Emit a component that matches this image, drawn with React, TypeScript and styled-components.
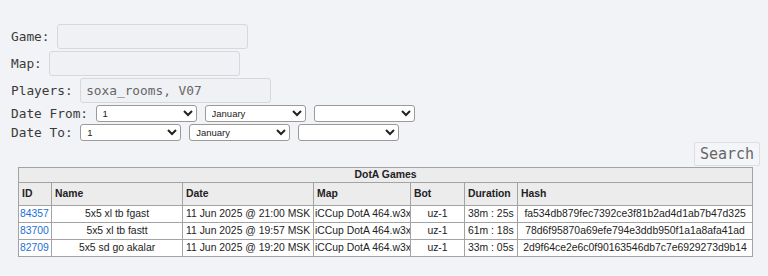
import React from "react";
import styled, { createGlobalStyle } from "styled-components";

const Global = createGlobalStyle`
  html, body { background: #f1f3f7; }
  body { margin: 8px; font-family: "DejaVu Sans Mono", monospace; color: #333; }
`;

const Page = styled.div`
  padding-top: 16px;
`;

const Form = styled.div`
  display: flex;
  flex-direction: column;
  gap: 2px;
  padding-left: 3px;
`;

const Row = styled.div`
  display: flex;
  align-items: center;
  font-size: 12.8px;
  gap: 7.5px;
  white-space: pre;
`;

const Label = styled.span`
  color: #3a3a3a;
`;

const TextInput = styled.input<{ $w: number }>`
  box-sizing: border-box;
  width: ${(p) => p.$w}px;
  height: 25px;
  border: 1px solid #d6d8dd;
  border-radius: 3px;
  background: #eff1f5;
  font-family: "DejaVu Sans Mono", monospace;
  font-size: 12.8px;
  color: #666;
  padding: 0 5px;
  margin: 0;
  outline: none;
`;

const Selects = styled.div`
  display: flex;
  gap: 8px;
`;

const Select = styled.select`
  box-sizing: border-box;
  width: 101px;
  height: 17px;
  margin: 0;
  font-family: "Liberation Sans", Arial, sans-serif;
  font-size: 9.5px;
  color: #222;
  background: #fff;
  border: 1px solid #9a9a9a;
  border-radius: 3px;
  padding: 0 2px;
`;

const ButtonBar = styled.div`
  display: flex;
  justify-content: flex-end;
  margin-top: 1px;
`;

const SearchButton = styled.button`
  box-sizing: border-box;
  width: 66px;
  height: 24px;
  border: 1px solid #dcdee2;
  border-radius: 2px;
  background: #f4f5f8;
  color: #666;
  font-family: "DejaVu Sans Mono", monospace;
  font-size: 15px;
  padding: 0;
  margin: 0;
`;

const Table = styled.table`
  margin: 1px 0 0 10px;
  border-collapse: collapse;
  table-layout: fixed;
  width: 734px;
  font-family: "Liberation Sans", Arial, sans-serif;
  font-size: 10.4px;
  color: #222;
  border: 1px solid #a3a3a3;
`;

const Caption = styled.th`
  background: #ececec;
  border: 1px solid #a3a3a3;
  font-weight: bold;
  font-size: 10.4px;
  padding: 1px 0 1px;
  line-height: 12px;
  text-align: center;
`;

const Th = styled.th`
  background: #ececec;
  border: 1px solid #a3a3a3;
  text-align: left;
  font-weight: bold;
  padding: 5px 3px 5px;
  line-height: 12px;
`;

const Td = styled.td<{ $align?: string; $pad?: string }>`
  background: #fff;
  border: 1px solid #a3a3a3;
  text-align: ${(p) => p.$align || "left"};
  padding: ${(p) => p.$pad || "2px 3px"};
  line-height: 12px;
  white-space: nowrap;
  overflow: hidden;
`;

const IdLink = styled.a`
  color: #1c6fd8;
  text-decoration: none;
`;

const cols = [33, 131, 131, 97, 54, 53, 235];

const games = [
  { id: "84357", name: "5x5 xl tb fgast", date: "11 Jun 2025 @ 21:00 MSK", map: "iCCup DotA 464.w3x", bot: "uz-1", dur: "38m : 25s", hash: "fa534db879fec7392ce3f81b2ad4d1ab7b47d325" },
  { id: "83700", name: "5x5 xl tb fastt", date: "11 Jun 2025 @ 19:57 MSK", map: "iCCup DotA 464.w3x", bot: "uz-1", dur: "61m : 18s", hash: "78d6f95870a69efe794e3ddb950f1a1a8afa41ad" },
  { id: "82709", name: "5x5 sd go akalar", date: "11 Jun 2025 @ 19:20 MSK", map: "iCCup DotA 464.w3x", bot: "uz-1", dur: "33m : 05s", hash: "2d9f64ce2e6c0f90163546db7c7e6929273d9b14" },
];

const DateSelects = () => (
  <Selects>
    <Select defaultValue="1">
      <option value="1">1</option>
    </Select>
    <Select defaultValue="January">
      <option value="January">January</option>
    </Select>
    <Select defaultValue="">
      <option value=""></option>
    </Select>
  </Selects>
);

export default function App() {
  return (
    <Page>
      <Global />
      <Form>
        <Row>
          <Label>Game:</Label>
          <TextInput $w={191} />
        </Row>
        <Row>
          <Label>Map:</Label>
          <TextInput $w={191} />
        </Row>
        <Row>
          <Label>Players:</Label>
          <TextInput $w={191} defaultValue="soxa_rooms, V07" />
        </Row>
        <Row>
          <Label>Date From:</Label>
          <DateSelects />
        </Row>
        <Row>
          <Label>Date To:</Label>
          <DateSelects />
        </Row>
      </Form>
      <ButtonBar>
        <SearchButton>Search</SearchButton>
      </ButtonBar>
      <Table>
        <colgroup>
          {cols.map((w, i) => (
            <col key={i} style={{ width: w }} />
          ))}
        </colgroup>
        <thead>
          <tr>
            <Caption colSpan={7}>DotA Games</Caption>
          </tr>
          <tr>
            <Th>ID</Th>
            <Th>Name</Th>
            <Th>Date</Th>
            <Th>Map</Th>
            <Th>Bot</Th>
            <Th>Duration</Th>
            <Th>Hash</Th>
          </tr>
        </thead>
        <tbody>
          {games.map((g) => (
            <tr key={g.id}>
              <Td $pad="2px 1px">
                <IdLink href="#">{g.id}</IdLink>
              </Td>
              <Td $align="center">{g.name}</Td>
              <Td>{g.date}</Td>
              <Td $pad="2px 0 2px 1px">{g.map}</Td>
              <Td $align="center">{g.bot}</Td>
              <Td>{g.dur}</Td>
              <Td $align="center">{g.hash}</Td>
            </tr>
          ))}
        </tbody>
      </Table>
    </Page>
  );
}
